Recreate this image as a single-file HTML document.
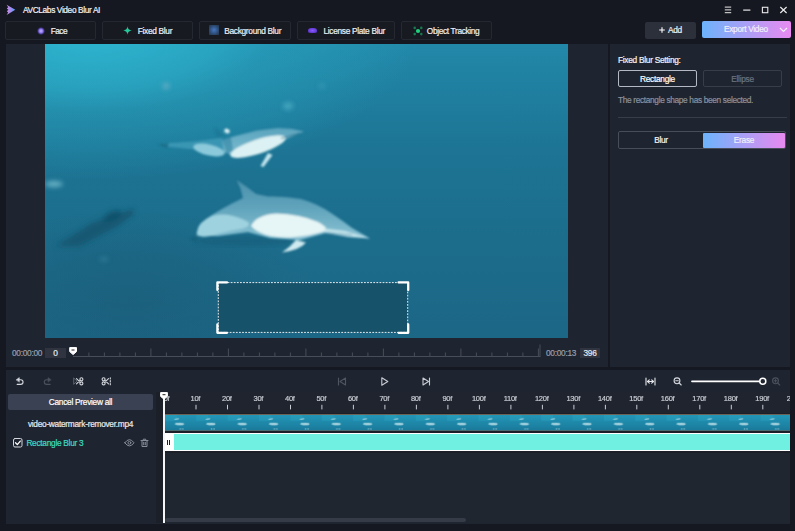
<!DOCTYPE html>
<html>
<head>
<meta charset="utf-8">
<title>AVCLabs Video Blur AI</title>
<style>
*{box-sizing:border-box;margin:0;padding:0}
html,body{width:795px;height:531px;overflow:hidden;background:#15171e;font-family:"Liberation Sans",sans-serif;color:#fff}
.abs{position:absolute}
#app{position:relative;width:795px;height:531px;background:#151820;overflow:hidden}
.title{left:23px;top:4.400px;letter-spacing:-0.36px;-webkit-text-stroke:0.2px currentColor;font-size:8.300px;line-height:12px;color:#f2f2f4;white-space:nowrap}
.tbtn{top:21px;height:19px;border:1px solid #242831;border-radius:2px;background:#171a21;letter-spacing:-0.25px;-webkit-text-stroke:0.2px currentColor;font-size:8.300px;line-height:17px;color:#f0f0f2;text-align:center;white-space:nowrap}
.tbtn i{position:absolute;display:block;width:8px;height:8px;top:4.500px;border-radius:50%}
.tbtn span{position:absolute;top:0.600px;line-height:17px;letter-spacing:-0.3px}
.panel{background:#1f2530}
.txt{font-size:8.300px;letter-spacing:-0.27px;white-space:nowrap;-webkit-text-stroke:0.2px currentColor}
.rl{top:394.400px;width:30px;text-align:center;line-height:10px;color:#c9ccd3;font-size:7.5px}
</style>
</head>
<body>
<div id="app">
  <!-- title bar -->
  <svg class="abs" style="left:6px;top:4px" width="10" height="12" viewBox="0 0 10 12">
    <defs><linearGradient id="lg" x1="0" y1="0" x2="1" y2="0"><stop offset="0" stop-color="#cf8fe2"/><stop offset="0.45" stop-color="#a58cf0"/><stop offset="1" stop-color="#4f9ef8"/></linearGradient></defs>
    <path d="M0.600 0.800L9.300 5.800L0.600 11L2.200 8.400L0.800 7.200L2.400 5.800L0.800 4.500L2.200 3.200Z" fill="url(#lg)"/>
  </svg>
  <div class="abs title">AVCLabs Video Blur AI</div>

  <div class="abs tbtn" style="left:5px;width:91px"><i style="left:31px;top:5px;width:7.500px;height:7.500px;background:radial-gradient(circle,#c4b6ff 0,#8a74ea 35%,rgba(80,60,190,0.5) 58%,transparent 74%)"></i><span style="left:44.700px;letter-spacing:-0.5px">Face</span></div>
  <div class="abs tbtn" style="left:102px;width:91px"><svg class="abs" style="left:20.100px;top:3.600px" width="9" height="9" viewBox="0 0 9 9"><path d="M4.500 0.300Q4.900 4.100 8.700 4.500Q4.900 4.900 4.500 8.700Q4.100 4.900 0.300 4.500Q4.100 4.100 4.500 0.300Z" fill="#25c89a"/></svg><span style="left:34.800px">Fixed Blur</span></div>
  <div class="abs tbtn" style="left:199px;width:92px"><i style="left:9px;top:3px;width:9.500px;height:9.500px;border-radius:1px;background:radial-gradient(circle,#4678bd 0,#34598f 40%,#27405f 75%)"></i><span style="left:24.300px">Background Blur</span></div>
  <div class="abs tbtn" style="left:297px;width:98px"><i style="left:10.200px;top:5.600px;width:9.200px;height:5.600px;border-radius:2.500px 2.500px 1.500px 1.500px;background:radial-gradient(ellipse,#8a5cf5 0,#6a3fe0 55%,rgba(80,45,180,0.5) 100%)"></i><span style="left:25.500px">License Plate Blur</span></div>
  <div class="abs tbtn" style="left:401px;width:91px"><svg class="abs" style="left:9.700px;top:3.200px" width="12" height="12" viewBox="-6 -6 12 12"><g fill="#17784e"><circle cx="-3.300" cy="-3.100" r="1.300"/><circle cx="3.300" cy="-3.100" r="1.300"/><circle cx="-3.300" cy="3.100" r="1.300"/><circle cx="3.300" cy="3.100" r="1.300"/></g><circle r="2.100" fill="#1fd07c"/></svg><span style="left:24.800px;letter-spacing:-0.34px">Object Tracking</span></div>

  <div class="abs tbtn" style="left:645px;width:51px;top:21.500px;height:17px;background:#2c303b;border:0"><svg class="abs" style="left:13.500px;top:5.500px" width="6" height="6" viewBox="0 0 6 6"><path d="M3 0.200v5.600M0.200 3h5.600" stroke="#fff" stroke-width="1.100"/></svg><span style="left:23px;top:0">Add</span></div>
  <div class="abs tbtn" style="left:702px;width:88.500px;top:21px;height:17px;border:0;background:linear-gradient(90deg,#6cb3fb,#e98af0)"><span style="left:22px;top:0;color:#f2effb">Export Video</span><svg class="abs" style="left:76.500px;top:5.500px" width="9" height="6" viewBox="0 0 9 6"><path d="M1 1l3.500 3.500l3.500-3.500" fill="none" stroke="#f6f0fc" stroke-width="1.200"/></svg></div>

  <!-- window controls -->
  <svg class="abs" style="left:720px;top:4px" width="70" height="12" viewBox="0 0 70 12" fill="none" stroke="#e8e8ea" stroke-width="1">
    <path d="M4.800 3.100h6.400M4.800 5.900h6.400M4.800 8.700h6.400"/>
    <path d="M23.200 6.100h7.200" stroke-width="1.200"/>
    <rect x="42.400" y="3.300" width="5.400" height="5.400" stroke-width="1.100"/>
    <path d="M60.300 3l6.300 6M66.600 3l-6.300 6" stroke-width="1.200"/>
  </svg>

  <!-- video panel -->
  <div class="abs panel" style="left:6px;top:44px;width:602px;height:323px"></div>
  <svg class="abs" id="video" style="left:45px;top:44px" width="523" height="294" viewBox="45 44 523 294">
    <defs>
      <linearGradient id="w1" x1="0" y1="0" x2="0" y2="1"><stop offset="0" stop-color="#2288a9"/><stop offset="0.054" stop-color="#2185a6"/><stop offset="0.36" stop-color="#1d7494"/><stop offset="0.70" stop-color="#1c6c8b"/><stop offset="1" stop-color="#1c6686"/></linearGradient>
      <radialGradient id="w2" cx="0" cy="0" r="1" gradientUnits="userSpaceOnUse" gradientTransform="translate(90 30) scale(330 150)"><stop offset="0" stop-color="#31c4dc" stop-opacity="0.75"/><stop offset="0.2" stop-color="#31c4dc" stop-opacity="0.62"/><stop offset="0.4" stop-color="#31c4dc" stop-opacity="0.47"/><stop offset="0.55" stop-color="#31c4dc" stop-opacity="0.26"/><stop offset="0.8" stop-color="#31c4dc" stop-opacity="0.14"/><stop offset="1" stop-color="#31c4dc" stop-opacity="0"/></radialGradient>
      <radialGradient id="w3" cx="0" cy="0" r="1" gradientUnits="userSpaceOnUse" gradientTransform="translate(130 300) scale(190 90)"><stop offset="0" stop-color="#1a5b76" stop-opacity="0.55"/><stop offset="0.5" stop-color="#1a5b76" stop-opacity="0.35"/><stop offset="1" stop-color="#1a5b76" stop-opacity="0"/></radialGradient>
      <linearGradient id="bk" x1="0" y1="0" x2="0" y2="1"><stop offset="0" stop-color="#4a90ab"/><stop offset="0.45" stop-color="#5fa3bb"/><stop offset="1" stop-color="#8cc4d5"/></linearGradient>
      <linearGradient id="bk2" x1="0" y1="0" x2="0" y2="1"><stop offset="0" stop-color="#5aa3bd"/><stop offset="1" stop-color="#7fbfd2"/></linearGradient>
      <filter id="b1" x="-20%" y="-20%" width="140%" height="140%"><feGaussianBlur stdDeviation="0.9"/></filter>
      <filter id="b2" x="-20%" y="-20%" width="140%" height="140%"><feGaussianBlur stdDeviation="2.500"/></filter>
    </defs>
    <rect x="45" y="44" width="523" height="294" fill="url(#w1)"/>
    <rect x="45" y="44" width="523" height="294" fill="url(#w2)"/>
    <rect x="45" y="44" width="523" height="294" fill="url(#w3)"/>
    <g filter="url(#b2)">
      <path d="M56 246 L92 223 L133 209 L134 214 L118 226 L80 246 Z" fill="#135671" opacity="0.95"/>
      <ellipse cx="112" cy="216" rx="10" ry="4" transform="rotate(-25 112 216)" fill="#11506a" opacity="0.9"/>
      <ellipse cx="166" cy="86" rx="3.500" ry="3" fill="#7fb4c8" opacity="0.7"/>
      <ellipse cx="288" cy="106" rx="5" ry="3.500" fill="#5fc0d4" opacity="0.6"/>
      <ellipse cx="322" cy="86" rx="3" ry="2.500" fill="#4aa8c2" opacity="0.5"/>
      <ellipse cx="104" cy="259" rx="4" ry="1.500" fill="#4f9ab4" opacity="0.6"/>
      <ellipse cx="54" cy="184" rx="9" ry="3" fill="#7cc4d4" opacity="0.8"/>
    </g>
    <!-- upper dolphin -->
    <g filter="url(#b1)">
      <path d="M163 143.500L193 141.500L222 138L224 151L195 149.500L170 147Z" fill="#4ba5c1" opacity="0.6"/>
      <path d="M157 144.500L169 143L167 148Z" fill="#1a6a86" opacity="0.8"/>
      <path d="M214 127L225 135.500L217 138Z" fill="#1e7795" opacity="0.75"/>
      <path d="M222 140L235.500 136L257 130.500L278 128L291 128.800L304 131.500L291 137L262 150L238 157L224 152Z" fill="url(#bk2)"/>
      <ellipse cx="209" cy="150" rx="16" ry="5.500" transform="rotate(13 209 150)" fill="#8ccadb"/>
      <path d="M222 139L231 137L233 150L227 155Z" fill="#2a7f9e" opacity="0.55"/>
      <ellipse cx="258" cy="146.600" rx="29" ry="7.200" transform="rotate(-18 258 146.600)" fill="#dcf1f3"/>
      <ellipse cx="227" cy="131" rx="2.800" ry="2.300" transform="rotate(25 227 131)" fill="#d8eef2"/>
      <path d="M268 153L272.500 155L263.500 167L260.500 166Z" fill="#c4e6ee"/>
      <path d="M281 138.500L300 133" stroke="#2a6a85" stroke-width="0.900" fill="none"/>
    </g>
    <!-- main dolphin -->
    <ellipse cx="245" cy="241" rx="50" ry="5" fill="#145c78" opacity="0.55" filter="url(#b2)"/>
    <g filter="url(#b1)">
      <path d="M236.600 180 Q246 186 256 194 L268 196.500 Q285 196 301 199 Q318 204 331 213 Q343 221 352 228 L370 238.500 L352 236 L326 233 L300 240 L270 238 L248 232 L218 236 L198 236 Q195 226 206 219 Q222 208 243 198 Q241 188 236.600 180Z" fill="url(#bk)"/>
      <path d="M196.500 234 Q198 222 212 216 Q228 211 248 222 Q252 227 240 229 Q222 232 210 236 Q200 238 196.500 234Z" fill="#9fd2df"/>
      <path d="M251 226 Q256 215 276 213.500 Q300 214 318 222 Q328 227 326 231 Q310 236 290 237.500 Q262 238 251 226Z" fill="#e6f5f5"/>
      <path d="M296 240 L306 242.500 Q300 250 282 252.500 Q290 247 296 240Z" fill="#cfeaf0"/>
      <path d="M324 228.500 L345 231 L370 238.500 L349 237 L326 233 Z" fill="#c2e4ec"/>
      <path d="M327 232.600L352 235.200" stroke="#3d7f99" stroke-width="0.700" fill="none"/>
      <path d="M189 239 L197 236 L196 242Z" fill="#17607c"/>
    </g>
    <!-- selection -->
    <rect x="218" y="282.500" width="190" height="50" fill="#16526a"/>
    <rect x="218.300" y="282.600" width="189.400" height="49.800" fill="none" stroke="#fff" stroke-width="0.900" stroke-dasharray="1.800 1.300"/>
    <g fill="none" stroke="#fff" stroke-width="2.300" stroke-linecap="round" stroke-linejoin="round">
      <path d="M217.400 290V282.400H227"/><path d="M398.600 282.400H408.200V290"/><path d="M217.400 324.500V332.800H227"/><path d="M398.600 332.800H408.200V324.500"/>
    </g>
  </svg>

  <!-- scrubber -->
  <div class="abs txt" style="left:12px;top:348px;line-height:10px;color:#9a9faa">00:00:00</div>
  <div class="abs txt" style="left:45px;top:348px;width:21px;height:10px;line-height:10px;background:#2f3440;color:#e6e8ec;text-align:center">0</div>
  <svg class="abs" style="left:0;top:340px" width="620" height="30" viewBox="0 340 620 30" fill="none" stroke="#474d59" stroke-width="1">
    <path d="M73 356.500H540.500"/>
    <g transform="translate(0,0.500)"><path d="M88.9 356V352"/><path d="M104.4 356V352"/><path d="M119.9 356V352"/><path d="M135.4 356V352"/><path d="M150.9 356V348"/><path d="M166.4 356V352"/><path d="M181.9 356V352"/><path d="M197.4 356V352"/><path d="M212.9 356V352"/><path d="M228.4 356V348"/><path d="M243.9 356V352"/><path d="M259.4 356V352"/><path d="M274.9 356V352"/><path d="M290.4 356V352"/><path d="M305.9 356V348"/><path d="M321.4 356V352"/><path d="M336.9 356V352"/><path d="M352.4 356V352"/><path d="M367.9 356V352"/><path d="M383.4 356V348"/><path d="M398.9 356V352"/><path d="M414.4 356V352"/><path d="M429.9 356V352"/><path d="M445.4 356V352"/><path d="M460.9 356V348"/><path d="M476.4 356V352"/><path d="M491.9 356V352"/><path d="M507.4 356V352"/><path d="M522.9 356V352"/><path d="M538.4 356V348"/><path d="M540 356V344"/></g>
    <path d="M69.700 347.600h6.800v4l-3.400 3l-3.400-3z" fill="#fff" stroke="#fff" stroke-linejoin="round"/>
    <path d="M71.500 350h3" stroke="#222" stroke-width="1"/>
  </svg>
  <div class="abs txt" style="left:546px;top:348px;line-height:10px;color:#9a9faa">00:00:13</div>
  <div class="abs txt" style="left:580px;top:348px;width:20px;height:10px;line-height:10px;background:#2f3440;color:#e6e8ec;text-align:center">396</div>

  <!-- right panel -->
  <div class="abs panel" style="left:610px;top:44px;width:180px;height:323px"></div>
  <div class="abs txt" style="left:618px;top:54.900px;line-height:10px;color:#f4f4f6">Fixed Blur Setting:</div>
  <div class="abs txt" style="left:618px;top:70px;width:79px;height:17px;line-height:17.400px;border:1px solid #b4b9c4;border-radius:2px;text-align:center;color:#fff">Rectangle</div>
  <div class="abs txt" style="left:703px;top:70px;width:79px;height:17px;line-height:17.400px;border:1px solid #373d49;border-radius:2px;text-align:center;color:#6d737f">Ellipse</div>
  <div class="abs txt" style="left:618px;top:94.600px;line-height:10px;letter-spacing:-0.33px;color:#8c929e">The rectangle shape has been selected.</div>
  <div class="abs" style="left:618px;top:117px;width:169px;height:1px;background:#373d49"></div>
  <div class="abs" style="left:618px;top:131px;width:168px;height:18px;border:1px solid #474d59;border-radius:2px"></div>
  <div class="abs txt" style="left:619px;top:132px;width:84px;height:16px;line-height:16px;text-align:center;color:#f4f4f6">Blur</div>
  <div class="abs txt" style="left:703px;top:132.500px;width:82px;height:15px;line-height:15px;text-align:center;color:#f0eefa;background:linear-gradient(90deg,#6cb4fb,#e78af0);border-radius:1px">Erase</div>

  <!-- timeline panel -->
  <div class="abs" style="left:5.500px;top:370px;width:784.500px;height:153.500px;background:#1f2530"></div>
  <div class="abs" style="left:156px;top:392px;width:634px;height:131px;background:#1b1f28"></div>
  <div class="abs" style="left:165px;top:392px;width:625px;height:21px;background:#1f242e"></div>
  <div class="abs" style="left:165px;top:452.500px;width:625px;height:70.500px;background:#20262f"></div>
  <svg class="abs" style="left:0;top:370px" width="795" height="24" viewBox="0 370 795 24" fill="none" stroke="#d4d7dd" stroke-width="1.100" stroke-linecap="round" stroke-linejoin="round">
    <!-- undo -->
    <path d="M19 379.700h1.700a2.350 2.350 0 0 1 0 4.700h-3.500"/><path d="M16.300 379.700l3-2.100v4.200z" fill="#d4d7dd" stroke-width="0.500"/>
    <!-- redo dim -->
    <g stroke="#4b515d"><path d="M48.300 379.700h-1.700a2.350 2.350 0 0 0 0 4.700h3.500"/><path d="M51 379.700l-3-2.100v4.200z" fill="#4b515d" stroke-width="0.500"/></g>
    <!-- scissors 1 -->
    <g><circle cx="81.400" cy="379.200" r="1.500"/><circle cx="81.400" cy="383.400" r="1.500"/><path d="M80.300 380.200l-3.800 3.700M80.300 382.400l-3.800-3.700"/><path d="M74 378.200l3 2.900l-3 2.900z" stroke="#6c727e" stroke-width="0.800"/></g>
    <!-- scissors 2 -->
    <g><circle cx="103.600" cy="379.200" r="1.500"/><circle cx="103.600" cy="383.400" r="1.500"/><path d="M104.700 380.200l3.800 3.700M104.700 382.400l3.800-3.700"/><path d="M110.300 377.700v1.300M110.300 380.600v1.300M110.300 383.500v1.300"/></g>
    <!-- prev dim -->
    <g stroke="#4f5561"><path d="M338.500 378v7"/><path d="M345.500 378v7l-5.500-3.500z"/></g>
    <!-- play -->
    <path d="M381.800 377.800v7.400l6-3.700z" stroke="#c9ccd3"/>
    <!-- next -->
    <g stroke="#c9ccd3"><path d="M429.500 378v7"/><path d="M423 378v7l5.500-3.500z"/></g>
    <!-- fit -->
    <g stroke="#e4e6ea"><path d="M646 378v7M655 378v7M647.500 381.500h6"/><path d="M649.300 379.800l-1.800 1.700l1.800 1.700M651.700 379.800l1.800 1.700l-1.800 1.700"/></g>
    <!-- zoom out -->
    <g stroke="#d4d7dd"><circle cx="677" cy="380.800" r="2.900"/><path d="M679.200 383l2 2M675.700 380.800h2.600"/></g>
    <!-- slider -->
    <path d="M692 381.300h68" stroke="#fff" stroke-width="1.800"/>
    <circle cx="762.800" cy="381.300" r="3" stroke="#fff" stroke-width="1.500" fill="#202631"/>
    <!-- zoom in dim -->
    <g stroke="#4b515d"><circle cx="775.500" cy="380.800" r="2.900"/><path d="M777.700 383l2 2M774.200 380.800h2.600M775.500 379.500v2.600"/></g>
  </svg>

  <div class="abs txt" style="left:8px;top:394px;width:145px;height:16px;line-height:17.600px;background:#3a4152;border-radius:2px;text-align:center;color:#fff">Cancel Preview all</div>
  <div class="abs txt" style="left:8px;top:418.500px;width:145px;line-height:10px;text-align:center;color:#e8eaee">video-watermark-remover.mp4</div>
  <svg class="abs" style="left:11.500px;top:437px" width="12" height="12" viewBox="0 0 12 12" fill="none" stroke="#d4d7dd" stroke-width="1" stroke-linecap="round" stroke-linejoin="round"><rect x="1.500" y="1.500" width="8.500" height="8.500" rx="1.500"/><path d="M3.500 5.800l1.800 1.800l3-3.500" stroke="#fff" stroke-width="1.300"/></svg>
  <div class="abs txt" style="left:26.400px;top:438.400px;line-height:10px;color:#3fdcc4">Rectangle Blur 3</div>
  <svg class="abs" style="left:122px;top:436px" width="32" height="14" viewBox="0 0 32 14" fill="none" stroke="#878d99" stroke-width="1" stroke-linecap="round" stroke-linejoin="round">
    <path d="M2.800 6.800q4.600-6.400 9.200 0q-4.600 6.400-9.200 0z"/><circle cx="7.400" cy="6.800" r="1.400"/>
    <path d="M19 4.500h7M20 4.500v6h5v-6M21.300 4.500v-1.300h2.400v1.300M21.700 6.300v2.500M23.300 6.300v2.500"/>
  </svg>

  <!-- ruler -->
  <div id="ruler" class="abs" style="left:0;top:0;width:790px;height:531px;overflow:hidden;pointer-events:none"><div class="abs txt rl" style="left:151.500px">0f</div><div class="abs txt rl" style="left:180.3px">10f</div><div class="abs txt rl" style="left:211.8px">20f</div><div class="abs txt rl" style="left:243.3px">30f</div><div class="abs txt rl" style="left:274.8px">40f</div><div class="abs txt rl" style="left:306.2px">50f</div><div class="abs txt rl" style="left:337.7px">60f</div><div class="abs txt rl" style="left:369.2px">70f</div><div class="abs txt rl" style="left:400.7px">80f</div><div class="abs txt rl" style="left:432.2px">90f</div><div class="abs txt rl" style="left:463.7px">100f</div><div class="abs txt rl" style="left:495.2px">110f</div><div class="abs txt rl" style="left:526.7px">120f</div><div class="abs txt rl" style="left:558.2px">130f</div><div class="abs txt rl" style="left:589.7px">140f</div><div class="abs txt rl" style="left:621.1px">150f</div><div class="abs txt rl" style="left:652.6px">160f</div><div class="abs txt rl" style="left:684.1px">170f</div><div class="abs txt rl" style="left:715.6px">180f</div><div class="abs txt rl" style="left:747.1px">190f</div><div class="abs txt rl" style="left:778.6px">200f</div></div>
  <svg class="abs" style="left:0;top:392px" width="790" height="22" viewBox="0 392 790 22" fill="none" stroke="#c9ccd3" stroke-width="1"><path d="M164.5 404.800v4.600" /><path d="M196.0 404.800v4.600" /><path d="M227.5 404.800v4.600" /><path d="M259.0 404.800v4.600" /><path d="M290.5 404.800v4.600" /><path d="M321.9 404.800v4.600" /><path d="M353.4 404.800v4.600" /><path d="M384.9 404.800v4.600" /><path d="M416.4 404.800v4.600" /><path d="M447.9 404.800v4.600" /><path d="M479.4 404.800v4.600" /><path d="M510.9 404.800v4.600" /><path d="M542.4 404.800v4.600" /><path d="M573.9 404.800v4.600" /><path d="M605.4 404.800v4.600" /><path d="M636.8 404.800v4.600" /><path d="M668.3 404.800v4.600" /><path d="M699.8 404.800v4.600" /><path d="M731.3 404.800v4.600" /><path d="M762.8 404.800v4.600" /><path d="M794.3 404.800v4.600" /></svg>

  <!-- thumbnail strip -->
  <svg class="abs" style="left:165px;top:413.800px" width="625" height="17.400" viewBox="0 0 625 18" preserveAspectRatio="none">
    <defs>
      <linearGradient id="thg" x1="0" y1="0" x2="0" y2="1"><stop offset="0" stop-color="#2398b9"/><stop offset="1" stop-color="#1a7899"/></linearGradient>
      <pattern id="th" x="0" y="0" width="31.350" height="18" patternUnits="userSpaceOnUse">
        <rect width="31.350" height="18" fill="url(#thg)"/>
        <rect width="12" height="7" fill="#2ba3c0" opacity="0.45"/>
        <ellipse cx="11.700" cy="5.200" rx="2.600" ry="0.700" fill="#cdeaf0" opacity="0.6" transform="rotate(-12 11.700 5.200)"/>
        <ellipse cx="14.800" cy="10.400" rx="4.300" ry="1.050" fill="#dff3f6" opacity="0.8"/>
        <ellipse cx="11.500" cy="10.300" rx="2" ry="0.800" fill="#a9dbe6" opacity="0.8"/>
        <rect x="14.500" y="15" width="1.500" height="0.800" fill="#cfeaf0" opacity="0.8"/><rect x="17" y="15" width="1.500" height="0.800" fill="#cfeaf0" opacity="0.8"/>
      </pattern>
    </defs>
    <rect width="625" height="18" fill="#6d6152"/>
    <rect y="1" width="625" height="16" fill="url(#th)"/>
  </svg>
  <!-- blur bar -->
  <div class="abs" style="left:165px;top:433px;width:625px;height:18px;background:#fff"></div>
  <div class="abs" style="left:174px;top:434px;width:616px;height:16px;background:#6ff0e1"></div>
  <div class="abs" style="left:166.600px;top:440px;width:1.400px;height:5.200px;background:#1d1f26"></div>
  <div class="abs" style="left:168.900px;top:440px;width:1.400px;height:5.200px;background:#1d1f26"></div>

  <!-- scrollbar -->
  <div class="abs" style="left:165px;top:518.200px;width:301px;height:3.800px;background:#353c48;border-radius:2px"></div>
  <!-- playhead -->
  <div class="abs" style="left:163.200px;top:396px;width:1.800px;height:127px;background:#f4f5f8"></div>
  <svg class="abs" style="left:159px;top:391px" width="10" height="11" viewBox="0 0 10 11"><path d="M1.600 1.600h6.800v3.800l-3.400 2.800l-3.400-2.800z" fill="#fff" stroke="#fff" stroke-linejoin="round"/><path d="M3.500 3.700h3" stroke="#222" stroke-width="1"/></svg>
</div>
</body>
</html>
